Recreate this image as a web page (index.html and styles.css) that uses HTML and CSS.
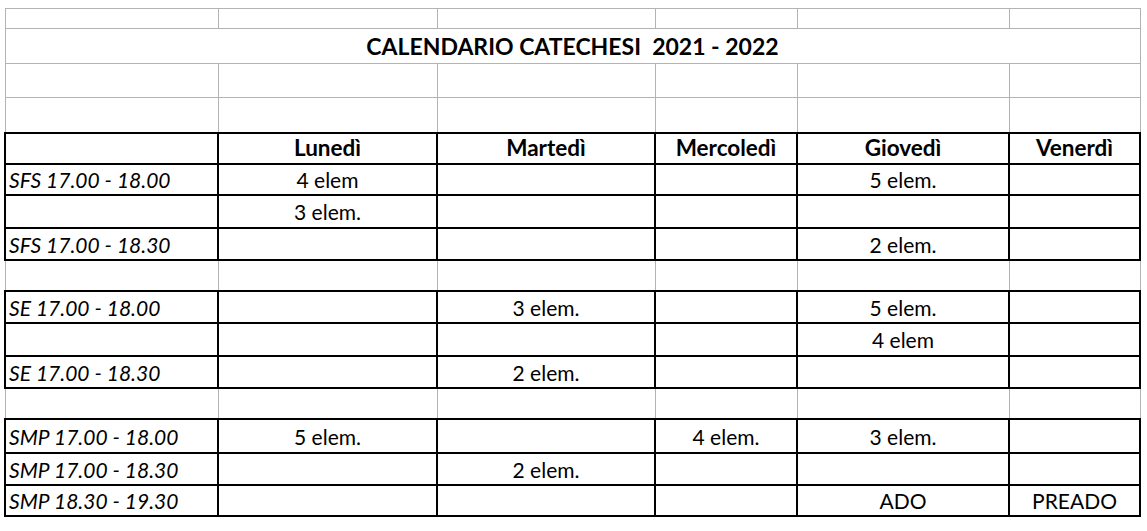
FILE: index.html
```html
<!DOCTYPE html>
<html lang="it">
<head>
<meta charset="utf-8">
<title>Calendario Catechesi 2021 - 2022</title>
<link rel="stylesheet" href="styles.css">
</head>
<body>
<div class="sheet">
<table class="grid">
  <colgroup>
    <col class="c1"><col class="c2"><col class="c3"><col class="c4"><col class="c5"><col class="c6">
  </colgroup>
  <tr class="r1"><td></td><td></td><td></td><td></td><td></td><td></td></tr>
  <tr class="r2"><td colspan="6" class="title">CALENDARIO CATECHESI&nbsp; 2021 - 2022</td></tr>
  <tr class="r3"><td></td><td></td><td></td><td></td><td></td><td></td></tr>
  <tr class="r4"><td></td><td></td><td></td><td></td><td></td><td></td></tr>
  <tr class="r5 blk head"><td></td><td>Lunedì</td><td>Martedì</td><td>Mercoledì</td><td>Giovedì</td><td>Venerdì</td></tr>
  <tr class="r6 blk"><td class="lab">SFS 17.00 - 18.00</td><td>4 elem</td><td></td><td></td><td>5 elem.</td><td></td></tr>
  <tr class="r7 blk"><td class="lab"></td><td>3 elem.</td><td></td><td></td><td></td><td></td></tr>
  <tr class="r8 blk"><td class="lab">SFS 17.00 - 18.30</td><td></td><td></td><td></td><td>2 elem.</td><td></td></tr>
  <tr class="r9"><td></td><td></td><td></td><td></td><td></td><td></td></tr>
  <tr class="r10 blk"><td class="lab">SE 17.00 - 18.00</td><td></td><td>3 elem.</td><td></td><td>5 elem.</td><td></td></tr>
  <tr class="r11 blk"><td class="lab"></td><td></td><td></td><td></td><td>4 elem</td><td></td></tr>
  <tr class="r12 blk"><td class="lab">SE 17.00 - 18.30</td><td></td><td>2 elem.</td><td></td><td></td><td></td></tr>
  <tr class="r13"><td></td><td></td><td></td><td></td><td></td><td></td></tr>
  <tr class="r14 blk"><td class="lab">SMP 17.00 - 18.00</td><td>5 elem.</td><td></td><td>4 elem.</td><td>3 elem.</td><td></td></tr>
  <tr class="r15 blk"><td class="lab">SMP 17.00 - 18.30</td><td></td><td>2 elem.</td><td></td><td></td><td></td></tr>
  <tr class="r16 blk"><td class="lab">SMP 18.30 - 19.30</td><td></td><td></td><td></td><td>ADO</td><td>PREADO</td></tr>
</table>
</div>
</body>
</html>
```
FILE: styles.css
```css
html, body {
  margin: 0;
  padding: 0;
  background: #ffffff;
}

.sheet {
  padding: 8px 0 0 4px;
}

.grid {
  border-collapse: collapse;
  table-layout: fixed;
  width: 1136px;
  font-family: Lato, "Open Sans", sans-serif;
  font-size: 21px;
  color: #000;
}

.c1 { width: 213px; }
.c2 { width: 219px; }
.c3 { width: 218px; }
.c4 { width: 142px; }
.c5 { width: 212px; }
.c6 { width: 131px; }

.grid td {
  border: 1px solid #b3b3b3;
  padding: 0 4px;
  text-align: center;
  vertical-align: middle;
  white-space: nowrap;
  overflow: hidden;
  line-height: 1;
}

.grid .blk td {
  border: 2px solid #000;
}

.grid td.lab {
  text-align: left;
  font-style: italic;
  padding-left: 3px;
}

.head td {
  font-weight: 700;
  font-size: 22.5px;
}

.title {
  font-weight: 700;
  font-size: 23px;
  padding-top: 2px;
}

.r1 td { height: 19px; }
.r2 td { height: 34px; }
.r3 td { height: 33px; }
.r4 td { height: 34px; }
.r5 td { height: 29px; }
.r6 td { height: 29px; }
.r7 td { height: 31px; }
.r8 td { height: 30px; }
.r9 td { height: 29px; }
.r10 td { height: 30px; }
.r11 td { height: 31px; }
.r12 td { height: 30px; }
.r13 td { height: 29px; }
.r14 td { height: 32px; }
.r15 td { height: 30px; }
.r16 td { height: 29px; }
```
